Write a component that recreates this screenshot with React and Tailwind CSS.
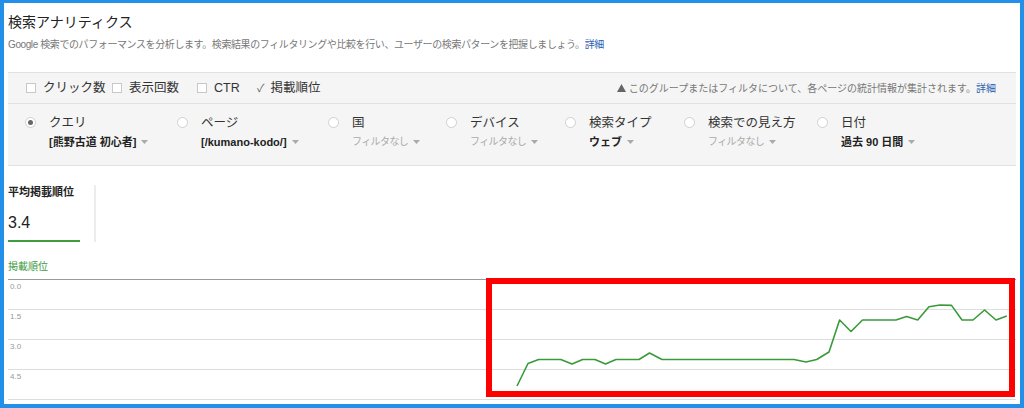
import React from "react";

const points = [
    [509, 107], [520, 84.5], [530.6, 80.5], [552.8, 80.5], [564, 85],
    [574.6, 80.5], [587, 80.5], [597.5, 85], [608, 80.5], [631, 80.5],
    [641.5, 74], [654, 80.5], [786, 80.5], [798, 83], [808.7, 80.5],
    [821, 73], [831.6, 41], [843, 52.5], [854.5, 41], [888, 41],
    [898.5, 37.6], [909.7, 41], [921, 27.7], [932, 26], [943.5, 26.4],
    [954, 41], [965, 41], [976.6, 31], [988, 41], [998.8, 37],
];

const dims = [
    { label: "クエリ", value: "[熊野古道 初心者]", on: true, w: "w-[152px]" },
    { label: "ページ", value: "[/kumano-kodo/]", w: "w-[151px]" },
    { label: "国", value: "フィルタなし", empty: true, w: "w-[118px]" },
    { label: "デバイス", value: "フィルタなし", empty: true, w: "w-[119px]" },
    { label: "検索タイプ", value: "ウェブ", w: "w-[119px]" },
    { label: "検索での見え方", value: "フィルタなし", empty: true, w: "w-[133px]" },
    { label: "日付", value: "過去 90 日間", w: "w-[140px]" },
];

function Caret() {
    return (
        <svg width="7" height="4" viewBox="0 0 7 4" className="ml-[5px] inline-block">
            <path d="M0 0h7L3.5 4z" fill="#aaa" />
        </svg>
    );
}

function Box() {
    return <span className="w-[10px] h-[10px] border border-[#c8c8c8] bg-white mr-[7px] shrink-0" />;
}

export default function App() {
    return (
        <div className="w-[1024px] h-[408px] overflow-hidden bg-white border-[#2290e8] border-l-4 border-r-4 border-t-[3px] border-b-4 px-1 font-['Liberation_Sans','Noto_Sans_CJK_JP',sans-serif] text-[#222]">
            <h1 className="mt-[9px] text-[14px] leading-[20px]">検索アナリティクス</h1>
            <p className="mt-[6px] text-[10px] leading-[14px] text-[#777] tracking-[-0.4px]">
                Google 検索でのパフォーマンスを分析します。検索結果のフィルタリングや比較を行い、ユーザーの検索パターンを把握しましょう。
                <span className="text-[#2a5db0]">詳細</span>
            </p>

            {/* メトリクス選択 */}
            <div className="mt-[20px] h-[32px] bg-[#f5f5f5] border-y border-[#e2e2e2] flex items-center pl-[18px] pr-[20px] text-[12.5px] text-[#333]">
                <div className="w-[86px] flex items-center"><Box />クリック数</div>
                <div className="w-[85px] flex items-center"><Box />表示回数</div>
                <div className="w-[60px] flex items-center"><Box />CTR</div>
                <div className="flex items-center">
                    <span className="text-[#666] mr-[6px] text-[11px]">✓</span>掲載順位
                </div>
                <div className="ml-auto flex items-center text-[10px] text-[#777]">
                    <svg width="9" height="8" viewBox="0 0 9 8" className="mr-[3px]">
                        <path d="M4.5 0L9 8H0z" fill="#666" />
                    </svg>
                    このグループまたはフィルタについて、各ページの統計情報が集計されます。
                    <span className="text-[#2a5db0]">詳細</span>
                </div>
            </div>

            {/* ディメンション */}
            <div className="h-[62px] bg-[#f5f5f5] border-b border-[#e2e2e2] flex pl-[17px] pt-[10px]">
                {dims.map((d) => (
                    <div key={d.label} className={`${d.w} flex shrink-0`}>
                        <span className="mt-[3px] w-[11px] h-[11px] rounded-full border border-[#d0d0d0] bg-white flex items-center justify-center shrink-0">
                            {d.on && <span className="w-[5px] h-[5px] rounded-full bg-[#666]" />}
                        </span>
                        <div className="ml-[13px]">
                            <div className="text-[12.5px] leading-[18px] text-[#333]">{d.label}</div>
                            <div className="mt-[3px] leading-[14px] flex items-center whitespace-nowrap">
                                {d.empty ? (
                                    <span className="text-[10px] text-[#aaa] tracking-[-0.6px]">{d.value}</span>
                                ) : (
                                    <span className="text-[11px] font-bold text-[#222]">{d.value}</span>
                                )}
                                <Caret />
                            </div>
                        </div>
                    </div>
                ))}
            </div>

            {/* 平均掲載順位 */}
            <div className="mt-[19px] w-[88px] h-[57px] border-r-2 border-[#ececec] flex flex-col">
                <div className="text-[11px] leading-[14px] font-bold">平均掲載順位</div>
                <div className="mt-[14px] text-[16px] leading-[20px]">3.4</div>
                <div className="mt-[7px] w-[72px] h-[2px] bg-[#3f9c3f]" />
            </div>

            <div className="mt-[19px] text-[10px] leading-[12px] text-[#3d9a3d]">掲載順位</div>

            {/* グラフ */}
            <div className="relative mt-[6px]">
                {["0.0", "1.5", "3.0", "4.5"].map((v, i) => (
                    <div
                        key={v}
                        className={`h-[30px] border-t ${i === 0 ? "border-[#999]" : "border-[#ddd]"} pl-[2px] pt-[2px] text-[8px] leading-[10px] text-[#999]`}
                    >
                        {v}
                    </div>
                ))}
                <div className="h-[2px] border-t border-[#ddd]" />
                <svg className="absolute left-0 top-0" width="1008" height="122" viewBox="0 0 1008 122">
                    <polyline
                        points={points.map((p) => p.join(",")).join(" ")}
                        fill="none"
                        stroke="#3a9a3a"
                        strokeWidth="1.6"
                        strokeLinejoin="round"
                    />
                </svg>
                <div className="absolute left-[478px] top-[-1px] w-[529px] h-[119px] border-[6px] border-[#ff0000]" />
            </div>
        </div>
    );
}
